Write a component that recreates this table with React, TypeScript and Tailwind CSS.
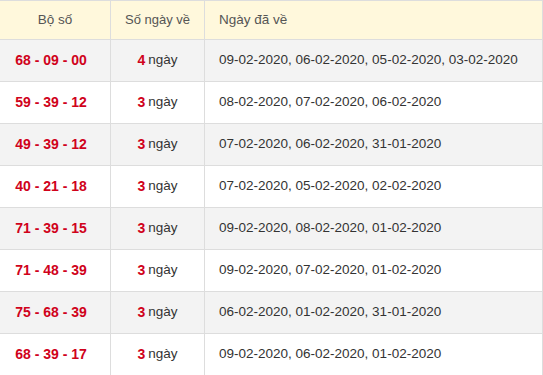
import React from "react";

const rows: [string, string, string][] = [
  ["68 - 09 - 00", "4", "09-02-2020, 06-02-2020, 05-02-2020, 03-02-2020"],
  ["59 - 39 - 12", "3", "08-02-2020, 07-02-2020, 06-02-2020"],
  ["49 - 39 - 12", "3", "07-02-2020, 06-02-2020, 31-01-2020"],
  ["40 - 21 - 18", "3", "07-02-2020, 05-02-2020, 02-02-2020"],
  ["71 - 39 - 15", "3", "09-02-2020, 08-02-2020, 01-02-2020"],
  ["71 - 48 - 39", "3", "09-02-2020, 07-02-2020, 01-02-2020"],
  ["75 - 68 - 39", "3", "06-02-2020, 01-02-2020, 31-01-2020"],
  ["68 - 39 - 17", "3", "09-02-2020, 06-02-2020, 01-02-2020"],
];

export default function App() {
  return (
    <div
      className="w-[543px] h-[375px] overflow-hidden bg-white"
      style={{ fontFamily: '"Liberation Sans", Arial, sans-serif' }}
    >
      <div className="border-t border-[#dddddd] grid grid-cols-[111px_94px_338px]">
        <div className="h-[39px] bg-[#fff8dc] border-r border-b border-[#dddddd] flex items-center justify-center text-[13.5px] text-[#555555]">
          Bộ số
        </div>
        <div className="h-[39px] bg-[#fff8dc] border-r border-b border-[#dddddd] flex items-center justify-center text-[13px] text-[#555555]">
          Số ngày về
        </div>
        <div className="h-[39px] bg-[#fff8dc] border-r border-b border-[#dddddd] flex items-center pl-[14px] text-[13.5px] text-[#555555]">
          Ngày đã về
        </div>
        {rows.map((r, i) => {
          const bg = i % 2 === 0 ? "bg-[#f3f3f3]" : "bg-white";
          return (
            <React.Fragment key={i}>
              <div
                className={`h-[42px] ${bg} border-r border-b border-[#dddddd] flex items-center justify-center pr-[8px] text-[14px] font-bold text-[#d0021b]`}
              >
                {r[0]}
              </div>
              <div
                className={`h-[42px] ${bg} border-r border-b border-[#dddddd] flex items-center justify-center text-[13.5px] text-[#333333]`}
              >
                <span className="font-bold text-[#d0021b] text-[14px] mr-[3px]">{r[1]}</span>
                ngày
              </div>
              <div
                className={`h-[42px] ${bg} border-r border-b border-[#dddddd] flex items-center pl-[14px] text-[13.5px] text-[#333333]`}
              >
                {r[2]}
              </div>
            </React.Fragment>
          );
        })}
      </div>
    </div>
  );
}
